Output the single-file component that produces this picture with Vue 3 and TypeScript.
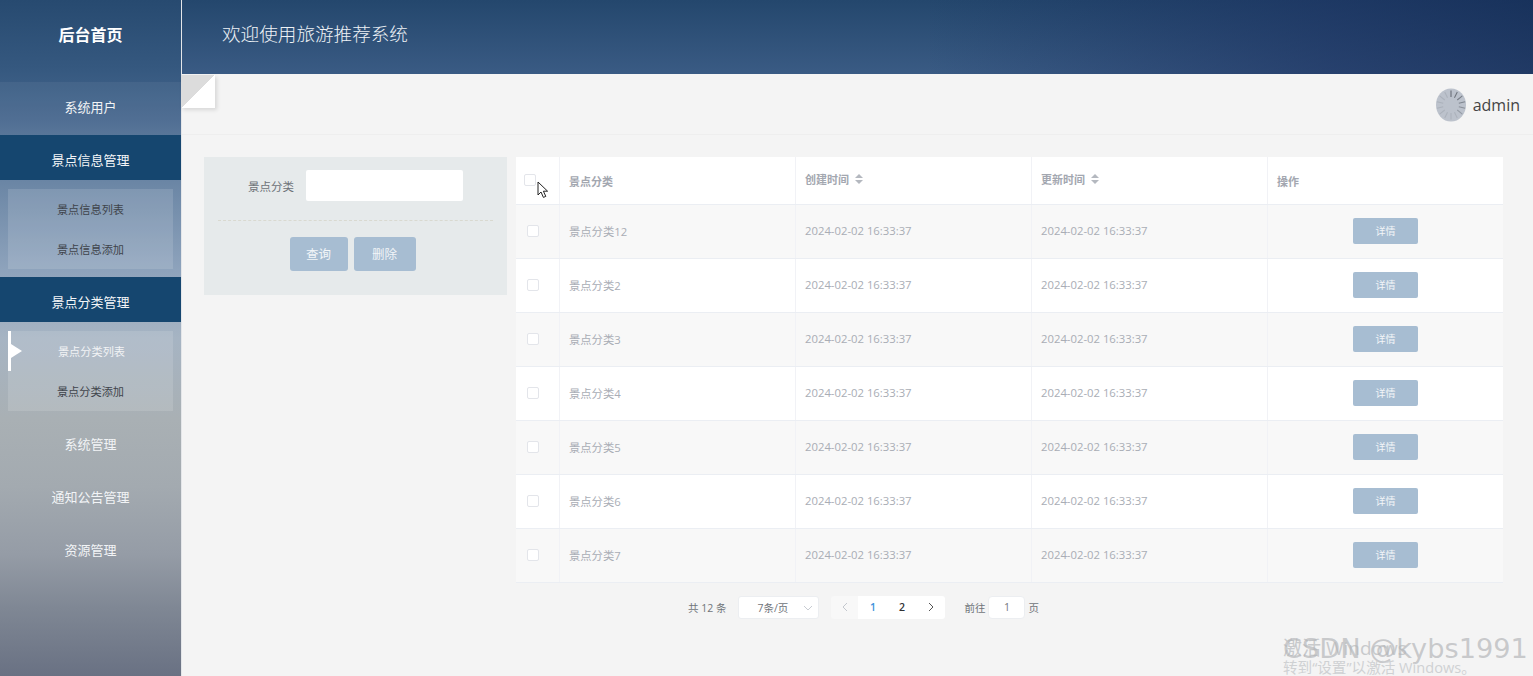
<script setup lang="ts">
interface Row { name: string }
const rows: Row[] = ['景点分类12', '景点分类2', '景点分类3', '景点分类4', '景点分类5', '景点分类6', '景点分类7'].map((name) => ({ name }))
const time = '2024-02-02 16:33:37'
const ticks = Array.from({ length: 14 }, (_, i) => i)
const tickOpacity = (t: number): number => (t < 6 ? 0.8 - t * 0.09 : 0.14)
</script>

<template>
  <div class="page">
    <aside class="side">
      <div class="logo">后台首页</div>
      <div class="item first">系统用户</div>
      <div class="head">景点信息管理</div>
      <div class="sub">
        <div class="subbox">
          <div class="subitem">景点信息列表</div>
          <div class="subitem">景点信息添加</div>
        </div>
      </div>
      <div class="head">景点分类管理</div>
      <div class="sub">
        <div class="subbox">
          <div class="subitem active">景点分类列表</div>
          <div class="subitem">景点分类添加</div>
        </div>
      </div>
      <div class="item">系统管理</div>
      <div class="item">通知公告管理</div>
      <div class="item">资源管理</div>
    </aside>

    <main class="main">
      <header class="top">欢迎使用旅游推荐系统</header>
      <div class="bar">
        <div class="fold"></div>
        <div class="user">
          <svg class="avatar" width="30" height="34" viewBox="0 0 30 34">
            <ellipse cx="15" cy="17" rx="15" ry="16.5" fill="#bcc2cc" />
            <line
              v-for="t in ticks"
              :key="t"
              x1="15"
              y1="2.5"
              x2="15"
              y2="9"
              stroke="#4a4f58"
              stroke-width="1"
              :stroke-opacity="tickOpacity(t)"
              :transform="`rotate(${t * (360 / 14)} 15 17)`"
            />
          </svg>
          <span>admin</span>
        </div>
      </div>

      <div class="content">
        <section class="search">
          <div class="field">
            <label>景点分类</label>
            <div class="input"></div>
          </div>
          <div class="btns">
            <button class="btn query">查询</button>
            <button class="btn del">删除</button>
          </div>
        </section>

        <section class="right">
          <div class="table">
            <div class="tr th">
              <div class="td c0"><i class="check hcheck"></i></div>
              <div class="td c1">景点分类</div>
              <div class="td c2">创建时间<span class="sort"><b class="up"></b><b class="down"></b></span></div>
              <div class="td c2">更新时间<span class="sort"><b class="up"></b><b class="down"></b></span></div>
              <div class="td c3">操作</div>
            </div>
            <div v-for="(r, i) in rows" :key="r.name" class="tr body" :class="{ odd: i % 2 === 0 }">
              <div class="td c0"><i class="check"></i></div>
              <div class="td c1">{{ r.name }}</div>
              <div class="td c2">{{ time }}</div>
              <div class="td c2">{{ time }}</div>
              <div class="td c3 center"><button class="detail">详情</button></div>
            </div>
          </div>

          <div class="pager">
            <span class="total">共 12 条</span>
            <div class="size">7条/页<svg width="10" height="6" viewBox="0 0 10 6"><path d="M1 1l4 4 4-4" fill="none" stroke="#c8ccd2" stroke-width="1" /></svg></div>
            <div class="pages">
              <span class="pg prev"><svg width="6" height="10" viewBox="0 0 6 10"><path d="M5 1L1 5l4 4" fill="none" stroke="#c4c8ce" stroke-width="1" /></svg></span>
              <span class="pg cur">1</span>
              <span class="pg bold">2</span>
              <span class="pg next"><svg width="6" height="10" viewBox="0 0 6 10"><path d="M1 1l4 4-4 4" fill="none" stroke="#555" stroke-width="1" /></svg></span>
            </div>
            <span class="goto">前往</span>
            <div class="jump">1</div>
            <span class="goto">页</span>
          </div>
        </section>
      </div>
    </main>

    <svg class="cursor" width="13" height="18" viewBox="0 0 13 18">
      <path d="M1 1v13l3-3 2.4 5.4 2.4-1-2.4-5.2h4.2z" fill="#fff" stroke="#222" stroke-width="1" stroke-linejoin="round" />
    </svg>

    <div class="mark">
      <div class="activate">激活 Windows</div>
      <div class="csdn">CSDN @kybs1991</div>
      <div class="activate2">转到“设置”以激活 Windows。</div>
    </div>
  </div>
</template>

<style>
html, body { margin: 0; background: #f4f4f4; overflow: hidden; }
</style>

<style scoped>
.page {
  position: relative;
  display: flex;
  width: 1533px;
  height: 676px;
  overflow: hidden;
  font-family: "Open Sans", "Noto Sans CJK SC", sans-serif;
  background: #f4f4f4;
}
.side {
  width: 181px;
  flex: none;
  height: 676px;
  color: #fff;
  background: linear-gradient(180deg, #274a70 0%, #35587f 10%, #48688f 18%, #6b86a5 27%, #8ea3bc 40%, #a6b4c3 50%, #a9b0b4 62%, #a3aab0 72%, #959ca6 82%, #7f8794 90%, #697183 100%);
}
.logo {
  height: 82px;
  padding-bottom: 14px;
  box-sizing: border-box;
  display: flex;
  align-items: center;
  justify-content: center;
  font-size: 16px;
  font-weight: 700;
}
.item {
  height: 53px;
  box-sizing: border-box;
  padding-bottom: 5px;
  display: flex;
  align-items: center;
  justify-content: center;
  font-size: 13px;
  color: #f2f4f6;
}
.item.first {
  background: rgba(255, 255, 255, 0.05);
}
.head {
  height: 45px;
  display: flex;
  align-items: center;
  justify-content: center;
  padding-top: 3px;
  box-sizing: border-box;
  background: #15466f;
  font-size: 13px;
  color: #f4f6f8;
}
.sub {
  height: 97px;
  box-sizing: border-box;
  padding: 9px 8px 8px;
}
.subbox {
  height: 80px;
  background: rgba(255, 255, 255, 0.13);
}
.subitem {
  position: relative;
  height: 40px;
  display: flex;
  align-items: center;
  justify-content: center;
  font-size: 11.2px;
  color: #3f444b;
}
.subitem.active {
  color: #f1f3f5;
  padding-left: 2px;
  box-sizing: border-box;
}
.subitem.active::before {
  content: "";
  position: absolute;
  left: 0;
  top: 0;
  width: 3px;
  height: 40px;
  background: #fff;
}
.subitem.active::after {
  content: "";
  position: absolute;
  left: 3px;
  top: 13px;
  border-left: 11px solid #fff;
  border-top: 7px solid transparent;
  border-bottom: 7px solid transparent;
}
.main {
  flex: 1;
  min-width: 0;
  border-left: 1px solid #e4e6e9;
}
.top {
  height: 74px;
  box-sizing: border-box;
  padding: 0 0 9px 40px;
  display: flex;
  align-items: center;
  font-size: 18.6px;
  font-weight: 300;
  color: #eef2f6;
  background:
    linear-gradient(90deg, rgba(20, 40, 90, 0) 55%, rgba(24, 44, 92, 0.55) 85%, rgba(16, 36, 80, 0.6) 100%),
    linear-gradient(180deg, #24476d 0%, #3a5b84 100%);
}
.bar {
  position: relative;
  height: 61px;
  box-sizing: border-box;
  border-bottom: 1px solid #eeeeee;
  display: flex;
  align-items: center;
  justify-content: flex-end;
  padding-right: 13px;
}
.fold {
  position: absolute;
  left: -1px;
  top: 1px;
  width: 34px;
  height: 33px;
  background: linear-gradient(135deg, #dcdcdc 50%, #fff 50%);
  box-shadow: 2px 2px 4px rgba(0, 0, 0, 0.12);
}
.user {
  display: flex;
  align-items: center;
  gap: 7px;
  font-size: 16px;
  color: #444;
  padding-top: 2px;
  margin-right: 0;
}
.avatar { margin-left: -1px; }
.content {
  display: flex;
  align-items: flex-start;
  padding: 22px 30px 0 22px;
  gap: 9px;
}
.search {
  width: 303px;
  height: 138px;
  flex: none;
  box-sizing: border-box;
  padding: 13px 14px 0;
  background: #e6eaeb;
}
.field {
  display: flex;
  align-items: center;
  justify-content: flex-start;
  padding: 0 0 19px 30px;
  gap: 12px;
  border-bottom: 1px dashed #d9d9d0;
  font-size: 11.5px;
  color: #6d7278;
}
.input {
  width: 157px;
  height: 31px;
  border-radius: 2px;
  background: #fff;
}
.btns {
  display: flex;
  justify-content: center;
  gap: 6px;
  margin-top: 16px;
  padding-right: 6px;
}
.btn {
  height: 34px;
  border: 0;
  border-radius: 3px;
  background: #a7bdd2;
  color: #f2f5f8;
  font: inherit;
  font-size: 12.5px;
  padding: 0 0 2px;
}
.query { width: 58px; }
.del { width: 62px; }
.right { width: 987px; flex: none; }
.table { background: #fff; }
.tr {
  display: flex;
  height: 54px;
  box-sizing: border-box;
  border-bottom: 1px solid #ebeef3;
  font-size: 11.3px;
  color: #a9adb5;
}
.tr.th {
  height: 48px;
  font-size: 11px;
  font-weight: 600;
  color: #a3a7b0;
}
.tr.body .td { padding-bottom: 2px; }
.tr.odd { background: #f8f8f8; }
.td {
  box-sizing: border-box;
  display: flex;
  align-items: center;
  padding-left: 9px;
  border-right: 1px solid #f1f2f6;
}
.td:last-child { border-right: 0; }
.c0 { width: 44px; padding-left: 11px; }
.c1 { width: 236px; }
.c2 { width: 236px; }
.c3 { width: 235px; }
.center { justify-content: center; padding-left: 0; }
.check {
  display: block;
  width: 10px;
  height: 10px;
  border: 1px solid #e3e5ea;
  border-radius: 2px;
  background: #fff;
}
.hcheck { margin-left: -3px; margin-top: -2px; }
.sort {
  display: inline-flex;
  flex-direction: column;
  gap: 2px;
  margin-left: 6px;
}
.sort b { display: block; width: 0; height: 0; border-left: 4px solid transparent; border-right: 4px solid transparent; }
.sort .up { border-bottom: 4px solid #b4b8bf; }
.sort .down { border-top: 4px solid #b4b8bf; }
.th .c2 { padding-bottom: 3px; }
.detail {
  width: 65px;
  height: 26px;
  border: 0;
  border-radius: 2px;
  background: #a7bdd2;
  color: #f2f5f8;
  font: inherit;
  font-size: 10px;
  padding: 0;
}
.pager {
  display: flex;
  align-items: center;
  height: 24px;
  margin-top: 12px;
  padding-left: 172px;
  font-size: 10.5px;
  color: #70747a;
}
.size {
  position: relative;
  width: 81px;
  height: 23px;
  margin-left: 12px;
  box-sizing: border-box;
  border: 1px solid #eceef1;
  border-radius: 3px;
  background: #fff;
  display: flex;
  align-items: center;
  padding-left: 18px;
}
.size svg { position: absolute; right: 5px; top: 8px; }
.pages {
  display: flex;
  margin-left: 12px;
  height: 23px;
  margin-right: 19px;
}
.pg {
  width: 29px;
  display: flex;
  align-items: center;
  justify-content: center;
  background: #fff;
  font-weight: 600;
  color: #303133;
  font-size: 10.5px;
}
.pg.prev { background: #f8f8f8; border-radius: 3px 0 0 3px; width: 27px; }
.pg.next { border-radius: 0 3px 3px 0; }
.pg.cur { color: #3f92dc; }
.goto { white-space: nowrap; }
.jump {
  width: 37px;
  height: 23px;
  box-sizing: border-box;
  margin: 0 3px 0 3px;
  border: 1px solid #eceef1;
  border-radius: 4px;
  background: #fff;
  display: flex;
  align-items: center;
  justify-content: center;
  color: #70747a;
}
.cursor { position: absolute; left: 537px; top: 181px; }
.mark { position: absolute; left: 1283px; top: 632px; width: 250px; height: 44px; overflow: hidden; pointer-events: none; }
.activate { position: absolute; left: 0; top: 1px; font-size: 19px; line-height: 30px; color: #c8cacc; white-space: nowrap; }
.csdn { position: absolute; left: 0; top: 0; font-family: "DejaVu Sans", sans-serif; font-size: 27.2px; line-height: 34px; color: rgba(180, 182, 185, 0.7); white-space: nowrap; }
.activate2 { position: absolute; left: 0; top: 24px; font-size: 14.6px; line-height: 22px; color: #cfd1d3; white-space: nowrap; }
</style>
